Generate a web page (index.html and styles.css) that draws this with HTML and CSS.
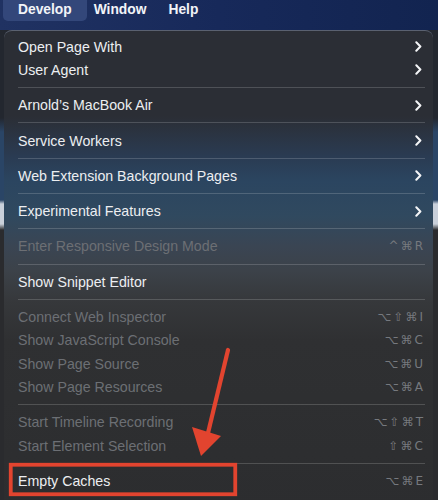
FILE: index.html
```html
<!DOCTYPE html>
<html lang="en">
<head>
<meta charset="utf-8">
<title>Develop menu</title>
<link rel="stylesheet" href="styles.css">
</head>
<body>
<div class="screen">
  <div class="menubar">
    <span class="mb-item active">Develop</span>
    <span class="mb-item">Window</span>
    <span class="mb-item">Help</span>
  </div>
  <div class="menu">
    <div class="item"><span class="label">Open Page With</span><svg class="chev" viewBox="0 0 7 11"><path d="M1.3 1.3 L5.4 5.5 L1.3 9.7"/></svg></div>
    <div class="item"><span class="label">User Agent</span><svg class="chev" viewBox="0 0 7 11"><path d="M1.3 1.3 L5.4 5.5 L1.3 9.7"/></svg></div>
    <div class="sep"></div>
    <div class="item"><span class="label">Arnold’s MacBook Air</span><svg class="chev" viewBox="0 0 7 11"><path d="M1.3 1.3 L5.4 5.5 L1.3 9.7"/></svg></div>
    <div class="sep"></div>
    <div class="item"><span class="label">Service Workers</span><svg class="chev" viewBox="0 0 7 11"><path d="M1.3 1.3 L5.4 5.5 L1.3 9.7"/></svg></div>
    <div class="sep"></div>
    <div class="item"><span class="label">Web Extension Background Pages</span><svg class="chev" viewBox="0 0 7 11"><path d="M1.3 1.3 L5.4 5.5 L1.3 9.7"/></svg></div>
    <div class="sep"></div>
    <div class="item"><span class="label">Experimental Features</span><svg class="chev" viewBox="0 0 7 11"><path d="M1.3 1.3 L5.4 5.5 L1.3 9.7"/></svg></div>
    <div class="sep"></div>
    <div class="item disabled"><span class="label">Enter Responsive Design Mode</span><span class="key">^⌘R</span></div>
    <div class="sep"></div>
    <div class="item"><span class="label">Show Snippet Editor</span></div>
    <div class="sep"></div>
    <div class="item disabled"><span class="label">Connect Web Inspector</span><span class="key">⌥⇧⌘I</span></div>
    <div class="item disabled"><span class="label">Show JavaScript Console</span><span class="key">⌥⌘C</span></div>
    <div class="item disabled"><span class="label">Show Page Source</span><span class="key">⌥⌘U</span></div>
    <div class="item disabled"><span class="label">Show Page Resources</span><span class="key">⌥⌘A</span></div>
    <div class="sep"></div>
    <div class="item disabled"><span class="label">Start Timeline Recording</span><span class="key">⌥⇧⌘T</span></div>
    <div class="item disabled"><span class="label">Start Element Selection</span><span class="key">⇧⌘C</span></div>
    <div class="sep"></div>
    <div class="item"><span class="label">Empty Caches</span><span class="key">⌥⌘E</span></div>
  </div>
  <svg class="annot" viewBox="0 0 438 500">
    <rect x="10.75" y="464.75" width="224.5" height="29.5" fill="none" stroke="#e2442f" stroke-width="3.8"/>
    <line x1="228" y1="350" x2="208" y2="433" stroke="#e2442f" stroke-width="4.2" stroke-linecap="round"/>
    <polygon points="192,427 221,436 201,456" fill="#e2442f"/>
  </svg>
</div>
</body>
</html>
```

FILE: styles.css
```css
html, body {
  margin: 0;
  padding: 0;
}

body {
  width: 438px;
  height: 500px;
  overflow: hidden;
  font-family: "Liberation Sans", Arial, sans-serif;
}

.screen {
  position: relative;
  width: 438px;
  height: 500px;
  overflow: hidden;
  background: linear-gradient(180deg,
    #1a2b56 0px, #1a2b56 30px,
    #23272f 30px, #23272f 118px,
    #2a4566 132px, #2a4566 200px,
    #c9d0da 204px, #c9d0da 224px,
    #2a2b2e 230px, #2a2b2e 500px);
}

.menubar {
  height: 30px;
  display: flex;
  align-items: flex-start;
  padding-left: 7px;
  background: linear-gradient(90deg, #203262 0%, #17295a 50%, #122450 100%);
}

.mb-item {
  height: 21px;
  line-height: 20px;
  padding: 0 11px;
  color: #f2f4f8;
  font-size: 13.8px;
  font-weight: bold;
}

.mb-item.active {
  margin: 0 -4px;
  padding: 0 15px;
  background: #33477a;
  border-radius: 0 0 5px 5px;
}

.menu {
  margin-left: 4px;
  width: 429px;
  height: 480px;
  box-sizing: border-box;
  padding-top: 4px;
  border-top: 1px solid #5a6170;
  border-radius: 8px 8px 0 0;
  background: linear-gradient(180deg,
    #2b2e35 0px,
    #2b2e35 85px,
    #2a3b52 125px,
    #2b4560 150px,
    #30495f 185px,
    #3a4553 215px,
    #3c4249 240px,
    #36383b 270px,
    #2f3032 310px,
    #2c2d2f 480px);
}

.item {
  height: 23.3px;
  display: flex;
  align-items: center;
  justify-content: space-between;
  padding: 0 10px 0 14px;
  color: #eceef1;
  font-size: 14.2px;
}

.item.disabled {
  color: #6c6f74;
}

.label {
  white-space: nowrap;
}

.key {
  font-family: "DejaVu Sans", sans-serif;
  font-size: 12px;
  letter-spacing: 2px;
  margin-right: -2px;
  color: #76797e;
  white-space: nowrap;
}

.chev {
  width: 7px;
  height: 11px;
  margin-right: 1px;
}

.chev path {
  fill: none;
  stroke: #f4f5f7;
  stroke-width: 2;
  stroke-linecap: round;
  stroke-linejoin: round;
}

.sep {
  height: 12px;
  display: flex;
  align-items: center;
  padding: 0 8px 0 14px;
}

.sep::before {
  content: "";
  flex: 1;
  height: 1px;
  background: rgba(255, 255, 255, 0.17);
}

.annot {
  position: absolute;
  left: 0;
  top: 0;
  width: 438px;
  height: 500px;
  pointer-events: none;
}
```
